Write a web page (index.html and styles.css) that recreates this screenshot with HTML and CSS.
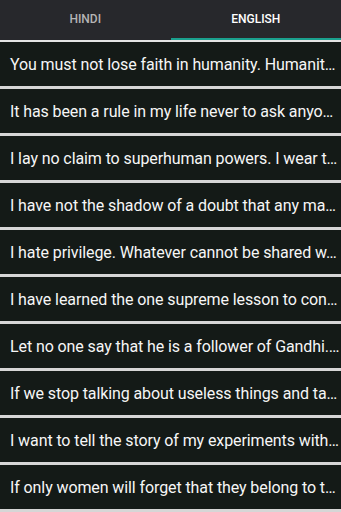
FILE: index.html
```html
<!DOCTYPE html>
<html lang="en">
<head>
  <meta charset="UTF-8" />
  <meta name="viewport" content="width=device-width, initial-scale=1.0"/>
  <title>Gandhi Quotes</title>
  <link rel="stylesheet" href="styles.css">
</head>
<body>
  <div class="tabs">
    <div class="tab">HINDI</div>
    <div class="tab active">ENGLISH</div>
  </div>

  <!-- list rows show the quote preview, cut to one line -->
  <ul class="quotes">
    <li>You must not lose faith in humanity. Humanit…</li>
    <li>It has been a rule in my life never to ask anyo…</li>
    <li>I lay no claim to superhuman powers. I wear t…</li>
    <li>I have not the shadow of a doubt that any ma…</li>
    <li>I hate privilege. Whatever cannot be shared w…</li>
    <li>I have learned the one supreme lesson to con…</li>
    <li>Let no one say that he is a follower of Gandhi.…</li>
    <li>If we stop talking about useless things and ta…</li>
    <li>I want to tell the story of my experiments with…</li>
    <li>If only women will forget that they belong to t…</li>
    <li></li>
  </ul>
</body>
</html>
```

FILE: styles.css
```css
body {
  margin: 0;
  padding: 0;
  background: #d6d6d6;
  font-family: Roboto, "Noto Sans", sans-serif;
  height: 512px;
  overflow: hidden;
}
.tabs {
  display: flex;
  height: 40px;
  background-color: #27282c;
  border-bottom: 2px solid #e4e4e4;
}
.tab {
  flex: 1;
  display: flex;
  justify-content: center;
  align-items: center;
  font-size: 12px;
  font-weight: 500;
  color: #b4b4b4;
  box-sizing: border-box;
  border-bottom: 2px solid transparent;
}
.tab.active {
  color: #ffffff;
  border-bottom-color: #1aa08e;
}
.quotes {
  list-style: none;
  margin: 0;
  padding: 0;
  display: flex;
  flex-direction: column;
  gap: 3px;
}
.quotes li {
  height: 44px;
  line-height: 46px;
  padding: 0 0 0 10px;
  background-color: #141a17;
  color: #f6f6f6;
  font-size: 16px;
  letter-spacing: -0.1px;
  white-space: nowrap;
  overflow: hidden;
  flex-shrink: 0;
}
```
